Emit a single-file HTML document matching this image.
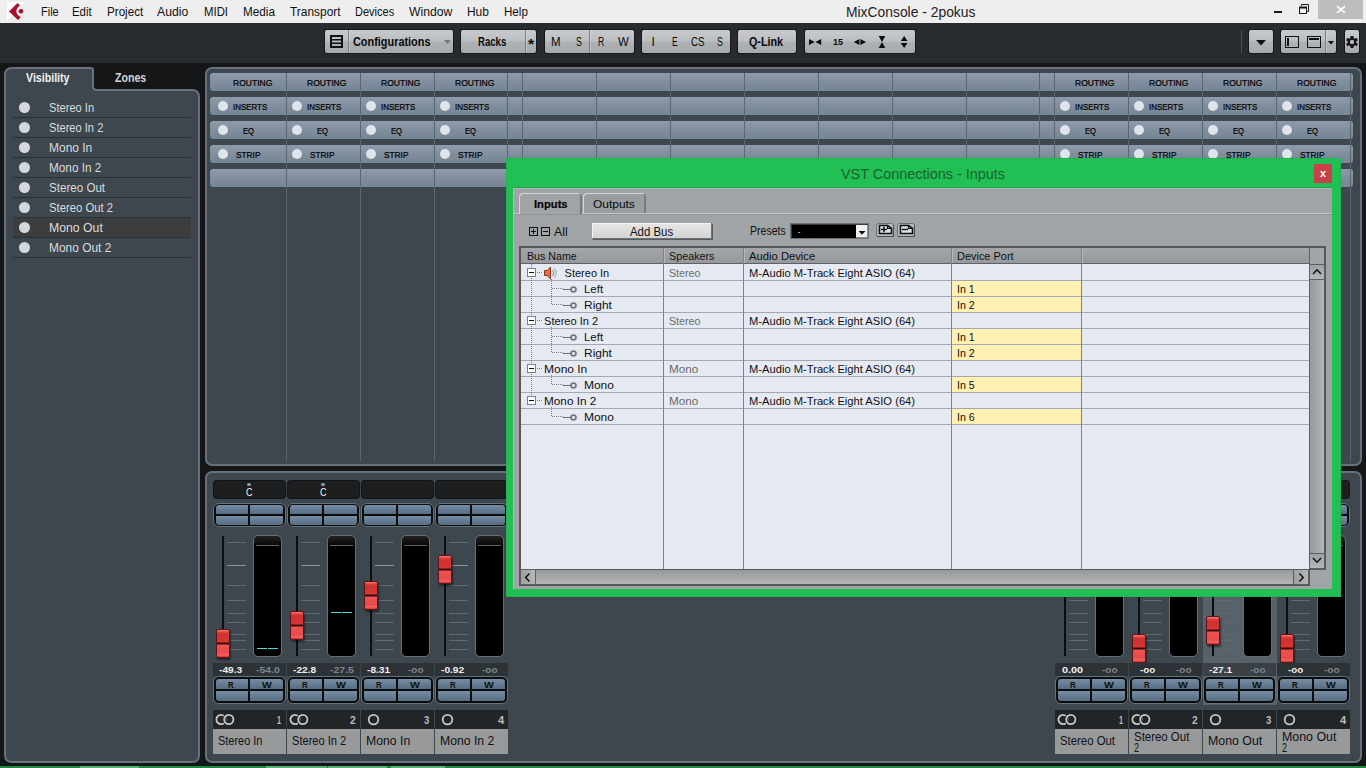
<!DOCTYPE html><html><head><meta charset="utf-8"><title>MixConsole - 2pokus</title><style>
*{box-sizing:border-box;margin:0;padding:0}
html,body{width:1366px;height:768px;overflow:hidden;background:#141617;font-family:"Liberation Sans",sans-serif;}
div{position:absolute}
span{position:absolute;white-space:nowrap}
svg{position:absolute}
.t{transform-origin:0 0}
#menubar{left:0;top:0;width:1366px;height:23px;background:#eeeeee}
#toolbar{left:0;top:23px;width:1366px;height:40px;background:#272b2f}
.tb{top:30px;height:23px;border-radius:2px;background:linear-gradient(#c8cbcd,#bbbec1 48%,#aeb2b5 53%,#a6aaad);box-shadow:0 0 0 1px #16181a}
.tb i{position:absolute;top:0;width:1px;height:23px;background:#7c8083;box-shadow:1px 0 0 rgba(255,255,255,.22)}
.panel{background:#3f474e;border:2px solid #66717b;border-radius:7px}
.row{height:18px;border-radius:3px;background:linear-gradient(#8e9caa,#7f8d9c 55%,#768696)}
.dot{width:10.600px;height:10.600px;border-radius:6px;background:#dfe3ea}
.vl{width:1px;background:#5a6672}
</style></head><body>
<div id="menubar"></div>
<svg style="left:0;top:0" width="32" height="23"><rect x="7" y="2" width="18" height="19" fill="#ebebeb"/><path d="M7 2 H25 L7 21 Z" fill="#fcfcfc"/><path d="M17.500 3 L20 5.600 C15.500 9 14.500 13.500 20.800 17.300 L18 19.900 L9 11.500 Z" fill="#a8112b"/><circle cx="21" cy="11.300" r="2.300" fill="#a8112b"/></svg>
<span class="t" style="left:40.5px;top:5px;font-size:12.5px;line-height:14px;color:#111;transform:scaleX(0.880);">File</span>
<span class="t" style="left:72.3px;top:5px;font-size:12.5px;line-height:14px;color:#111;transform:scaleX(0.909);">Edit</span>
<span class="t" style="left:106.5px;top:5px;font-size:12.5px;line-height:14px;color:#111;transform:scaleX(0.931);">Project</span>
<span class="t" style="left:157.1px;top:5px;font-size:12.5px;line-height:14px;color:#111;transform:scaleX(0.978);">Audio</span>
<span class="t" style="left:203.6px;top:5px;font-size:12.5px;line-height:14px;color:#111;transform:scaleX(0.910);">MIDI</span>
<span class="t" style="left:242.6px;top:5px;font-size:12.5px;line-height:14px;color:#111;transform:scaleX(0.938);">Media</span>
<span class="t" style="left:289.5px;top:5px;font-size:12.5px;line-height:14px;color:#111;transform:scaleX(0.953);">Transport</span>
<span class="t" style="left:354.6px;top:5px;font-size:12.5px;line-height:14px;color:#111;transform:scaleX(0.882);">Devices</span>
<span class="t" style="left:408.5px;top:5px;font-size:12.5px;line-height:14px;color:#111;transform:scaleX(0.975);">Window</span>
<span class="t" style="left:466.5px;top:5px;font-size:12.5px;line-height:14px;color:#111;transform:scaleX(0.955);">Hub</span>
<span class="t" style="left:503.6px;top:5px;font-size:12.5px;line-height:14px;color:#111;transform:scaleX(0.927);">Help</span>
<span class="t" style="left:845.6px;top:4px;font-size:14px;line-height:16px;color:#222;transform:scaleX(0.990);">MixConsole - 2pokus</span>
<div style="left:1318px;top:0;width:45px;height:19px;background:#bdbdbd"></div>
<svg style="left:1270px;top:0" width="96" height="22" viewBox="0 0 96 22"><rect x="4" y="11" width="8" height="2" fill="#1a1a1a"/><path d="M31.500 6 V4.500 H38.500 V11.500 H37" fill="none" stroke="#1a1a1a"/><rect x="29.500" y="7.500" width="7" height="6" fill="none" stroke="#1a1a1a"/><rect x="29" y="6.500" width="8" height="2" fill="#1a1a1a"/><path d="M67 6.200 L75 12.800 M75 6.200 L67 12.800" stroke="#fff" stroke-width="1.600"/></svg>
<div id="toolbar"></div>
<div class="tb" style="left:325px;width:128px"><i style="left:23px"></i><svg style="left:5px;top:5px" width="13" height="13"><rect x="1" y="1" width="11" height="11" fill="none" stroke="#111" stroke-width="2"/><rect x="2" y="4" width="9" height="1.500" fill="#111"/><rect x="2" y="7.500" width="9" height="1.500" fill="#111"/></svg><svg style="left:119px;top:10px" width="8" height="5"><path d="M0 0 H7 L3.500 4 Z" fill="#777"/></svg></div>
<span class="t" style="left:352.6px;top:35px;font-size:12px;line-height:14px;color:#0a0a0a;font-weight:bold;transform:scaleX(0.908);">Configurations</span>
<div class="tb" style="left:461px;width:75px"><i style="left:64px"></i></div>
<span class="t" style="left:478px;top:35px;font-size:12px;line-height:14px;color:#0a0a0a;font-weight:bold;transform:scaleX(0.798);">Racks</span>
<span class="t" style="left:528.4px;top:36px;font-size:14px;line-height:16px;color:#0a0a0a;font-weight:bold;transform:scaleX(1.136);">*</span>
<div class="tb" style="left:545px;width:89px"><i style="left:44px"></i></div>
<span class="t" style="left:550.7px;top:35px;font-size:12px;line-height:14px;color:#0a0a0a;transform:scaleX(0.958);">M</span>
<span class="t" style="left:575.7px;top:35px;font-size:12px;line-height:14px;color:#0a0a0a;transform:scaleX(0.739);">S</span>
<span class="t" style="left:597.6px;top:35px;font-size:12px;line-height:14px;color:#0a0a0a;transform:scaleX(0.718);">R</span>
<span class="t" style="left:618.4px;top:35px;font-size:12px;line-height:14px;color:#0a0a0a;transform:scaleX(0.952);">W</span>
<div class="tb" style="left:642px;width:88px"></div>
<span class="t" style="left:651.6px;top:35px;font-size:12px;line-height:14px;color:#0a0a0a;">I</span>
<span class="t" style="left:672px;top:35px;font-size:12px;line-height:14px;color:#0a0a0a;transform:scaleX(0.702);">E</span>
<span class="t" style="left:690.9px;top:35px;font-size:12px;line-height:14px;color:#0a0a0a;transform:scaleX(0.809);">CS</span>
<span class="t" style="left:716.9px;top:35px;font-size:12px;line-height:14px;color:#0a0a0a;transform:scaleX(0.727);">S</span>
<div class="tb" style="left:738px;width:58px"></div>
<span class="t" style="left:749.4px;top:35px;font-size:12px;line-height:14px;color:#0a0a0a;font-weight:bold;transform:scaleX(0.896);">Q-Link</span>
<div class="tb" style="left:805px;width:110px"><svg style="left:0;top:0" width="110" height="23"><g fill="#0c0c0c"><path d="M4 9 L9.700 12 L4 15Z M16.200 9 L10.500 12 L16.200 15Z"/><path d="M54.400 9 L48.800 12 L54.400 15Z M55.400 9 L61 12 L55.400 15Z"/><path d="M73.700 6 H80.300 L77 11.900Z M73.700 18 H80.300 L77 12.100Z"/><path d="M95.800 11 H102.500 L99.150 6Z M95.800 13 H102.500 L99.150 18Z"/></g></svg></div>
<span class="t" style="left:833px;top:36px;font-size:9.5px;line-height:11px;color:#0a0a0a;font-weight:bold;transform:scaleX(0.948);">15</span>
<div style="left:1241px;top:30px;width:1px;height:23px;background:#4a4f53"></div>
<div class="tb" style="left:1249px;width:24px"><svg style="left:7px;top:10px" width="10" height="6"><path d="M0 0 H10 L5 5.500Z" fill="#111"/></svg></div>
<div class="tb" style="left:1281px;width:55px"><i style="left:44px"></i><svg style="left:0;top:0" width="55" height="23"><g fill="none" stroke="#111" stroke-width="1"><rect x="4.500" y="6.500" width="13" height="11"/><rect x="26.500" y="6.500" width="13" height="11"/></g><rect x="6" y="8" width="2" height="8" fill="#111"/><rect x="28" y="8" width="10" height="2" fill="#111"/><path d="M47 11 H53 L50 14.500Z" fill="#111"/></svg></div>
<div class="tb" style="left:1345px;width:14px"><svg style="left:0px;top:5px" width="14" height="14" viewBox="0 0 14 14"><g transform="translate(7,7)"><g fill="#111"><rect x="-1.500" y="-6" width="3" height="12"/><rect x="-1.500" y="-6" width="3" height="12" transform="rotate(60)"/><rect x="-1.500" y="-6" width="3" height="12" transform="rotate(120)"/><circle r="4.300"/></g><circle r="2.200" fill="#b3b6b9"/></g></svg></div>
<svg style="left:0;top:60px" width="204" height="706"><path d="M5 15 Q5 8 12 8 H91 Q93 8 93 10 V26 Q93 30 97 30 H192 Q199 30 199 37 V695 Q199 702 192 702 H12 Q5 702 5 695 Z" fill="#3f474e" stroke="#66717b" stroke-width="2"/></svg>
<span class="t" style="left:25.5px;top:71px;font-size:12px;line-height:14px;color:#f2f2f2;font-weight:bold;transform:scaleX(0.885);">Visibility</span>
<span class="t" style="left:114.6px;top:71px;font-size:12px;line-height:14px;color:#d6d6d6;font-weight:bold;transform:scaleX(0.883);">Zones</span>
<div class="dot" style="left:19px;top:102px;background:#d4d8de"></div>
<span class="t" style="left:48.9px;top:101px;font-size:12.5px;line-height:14px;color:#d9dcdf;transform:scaleX(0.889);">Stereo In</span>
<div style="left:13px;top:117px;width:178px;height:1px;background:#2b3035"></div>
<div class="dot" style="left:19px;top:122px;background:#d4d8de"></div>
<span class="t" style="left:48.9px;top:121px;font-size:12.5px;line-height:14px;color:#d9dcdf;transform:scaleX(0.888);">Stereo In 2</span>
<div style="left:13px;top:137px;width:178px;height:1px;background:#2b3035"></div>
<div class="dot" style="left:19px;top:142px;background:#d4d8de"></div>
<span class="t" style="left:48.9px;top:141px;font-size:12.5px;line-height:14px;color:#d9dcdf;transform:scaleX(0.958);">Mono In</span>
<div style="left:13px;top:157px;width:178px;height:1px;background:#2b3035"></div>
<div class="dot" style="left:19px;top:162px;background:#d4d8de"></div>
<span class="t" style="left:48.9px;top:161px;font-size:12.5px;line-height:14px;color:#d9dcdf;transform:scaleX(0.941);">Mono In 2</span>
<div style="left:13px;top:177px;width:178px;height:1px;background:#2b3035"></div>
<div class="dot" style="left:19px;top:182px;background:#d4d8de"></div>
<span class="t" style="left:48.9px;top:181px;font-size:12.5px;line-height:14px;color:#d9dcdf;transform:scaleX(0.928);">Stereo Out</span>
<div style="left:13px;top:197px;width:178px;height:1px;background:#2b3035"></div>
<div class="dot" style="left:19px;top:202px;background:#d4d8de"></div>
<span class="t" style="left:48.9px;top:201px;font-size:12.5px;line-height:14px;color:#d9dcdf;transform:scaleX(0.904);">Stereo Out 2</span>
<div style="left:13px;top:217px;width:178px;height:1px;background:#2b3035"></div>
<div style="left:13px;top:218px;width:178px;height:19px;background:#3b3d3f"></div>
<div class="dot" style="left:19px;top:222px;background:#d4d8de"></div>
<span class="t" style="left:48.9px;top:221px;font-size:12.5px;line-height:14px;color:#d9dcdf;transform:scaleX(0.980);">Mono Out</span>
<div style="left:13px;top:237px;width:178px;height:1px;background:#2b3035"></div>
<div class="dot" style="left:19px;top:242px;background:#d4d8de"></div>
<span class="t" style="left:48.9px;top:241px;font-size:12.5px;line-height:14px;color:#d9dcdf;transform:scaleX(0.954);">Mono Out 2</span>
<div style="left:13px;top:257px;width:178px;height:1px;background:#2b3035"></div>
<div class="panel" style="left:205px;top:67px;width:1157px;height:399px"></div>
<div class="row" style="left:210px;top:73px;width:1143px"></div>
<div class="row" style="left:210px;top:97px;width:1143px"></div>
<div class="row" style="left:210px;top:121px;width:1143px"></div>
<div class="row" style="left:210px;top:145px;width:1143px"></div>
<div class="row" style="left:210px;top:169px;width:1143px"></div>
<div class="vl" style="left:286px;top:73px;height:388px"></div>
<div class="vl" style="left:360px;top:73px;height:388px"></div>
<div class="vl" style="left:434px;top:73px;height:388px"></div>
<div class="vl" style="left:507px;top:73px;height:388px"></div>
<div class="vl" style="left:522px;top:73px;height:388px"></div>
<div class="vl" style="left:596px;top:73px;height:388px"></div>
<div class="vl" style="left:670px;top:73px;height:388px"></div>
<div class="vl" style="left:744px;top:73px;height:388px"></div>
<div class="vl" style="left:818px;top:73px;height:388px"></div>
<div class="vl" style="left:892px;top:73px;height:388px"></div>
<div class="vl" style="left:966px;top:73px;height:388px"></div>
<div class="vl" style="left:1039px;top:73px;height:388px"></div>
<div class="vl" style="left:1054px;top:73px;height:388px"></div>
<div class="vl" style="left:1128px;top:73px;height:388px"></div>
<div class="vl" style="left:1202px;top:73px;height:388px"></div>
<div class="vl" style="left:1276px;top:73px;height:388px"></div>
<div class="vl" style="left:1350px;top:73px;height:388px"></div>
<span class="t" style="left:232.6px;top:77px;font-size:9.7px;line-height:11px;color:#000;transform:scaleX(0.883);-webkit-text-stroke:0.22px #000;">ROUTING</span>
<span class="t" style="left:306.6px;top:77px;font-size:9.7px;line-height:11px;color:#000;transform:scaleX(0.883);-webkit-text-stroke:0.22px #000;">ROUTING</span>
<span class="t" style="left:380.6px;top:77px;font-size:9.7px;line-height:11px;color:#000;transform:scaleX(0.883);-webkit-text-stroke:0.22px #000;">ROUTING</span>
<span class="t" style="left:454.6px;top:77px;font-size:9.7px;line-height:11px;color:#000;transform:scaleX(0.883);-webkit-text-stroke:0.22px #000;">ROUTING</span>
<span class="t" style="left:1074.5px;top:77px;font-size:9.7px;line-height:11px;color:#000;transform:scaleX(0.883);-webkit-text-stroke:0.22px #000;">ROUTING</span>
<span class="t" style="left:1148.5px;top:77px;font-size:9.7px;line-height:11px;color:#000;transform:scaleX(0.883);-webkit-text-stroke:0.22px #000;">ROUTING</span>
<span class="t" style="left:1222.5px;top:77px;font-size:9.7px;line-height:11px;color:#000;transform:scaleX(0.883);-webkit-text-stroke:0.22px #000;">ROUTING</span>
<span class="t" style="left:1296.5px;top:77px;font-size:9.7px;line-height:11px;color:#000;transform:scaleX(0.883);-webkit-text-stroke:0.22px #000;">ROUTING</span>
<div class="dot" style="left:217.7px;top:100.7px"></div>
<span class="t" style="left:232.6px;top:101px;font-size:9.7px;line-height:11px;color:#000;transform:scaleX(0.819);-webkit-text-stroke:0.22px #000;">INSERTS</span>
<div class="dot" style="left:291.7px;top:100.7px"></div>
<span class="t" style="left:306.6px;top:101px;font-size:9.7px;line-height:11px;color:#000;transform:scaleX(0.819);-webkit-text-stroke:0.22px #000;">INSERTS</span>
<div class="dot" style="left:365.7px;top:100.7px"></div>
<span class="t" style="left:380.6px;top:101px;font-size:9.7px;line-height:11px;color:#000;transform:scaleX(0.819);-webkit-text-stroke:0.22px #000;">INSERTS</span>
<div class="dot" style="left:439.7px;top:100.7px"></div>
<span class="t" style="left:454.6px;top:101px;font-size:9.7px;line-height:11px;color:#000;transform:scaleX(0.819);-webkit-text-stroke:0.22px #000;">INSERTS</span>
<div class="dot" style="left:1059.6px;top:100.7px"></div>
<span class="t" style="left:1074.5px;top:101px;font-size:9.7px;line-height:11px;color:#000;transform:scaleX(0.819);-webkit-text-stroke:0.22px #000;">INSERTS</span>
<div class="dot" style="left:1133.6px;top:100.7px"></div>
<span class="t" style="left:1148.5px;top:101px;font-size:9.7px;line-height:11px;color:#000;transform:scaleX(0.819);-webkit-text-stroke:0.22px #000;">INSERTS</span>
<div class="dot" style="left:1207.6px;top:100.7px"></div>
<span class="t" style="left:1222.5px;top:101px;font-size:9.7px;line-height:11px;color:#000;transform:scaleX(0.819);-webkit-text-stroke:0.22px #000;">INSERTS</span>
<div class="dot" style="left:1281.6px;top:100.7px"></div>
<span class="t" style="left:1296.5px;top:101px;font-size:9.7px;line-height:11px;color:#000;transform:scaleX(0.819);-webkit-text-stroke:0.22px #000;">INSERTS</span>
<div class="dot" style="left:217.7px;top:124.7px"></div>
<span class="t" style="left:243.4px;top:125px;font-size:9.7px;line-height:11px;color:#000;transform:scaleX(0.785);-webkit-text-stroke:0.22px #000;">EQ</span>
<div class="dot" style="left:291.7px;top:124.7px"></div>
<span class="t" style="left:317.4px;top:125px;font-size:9.7px;line-height:11px;color:#000;transform:scaleX(0.785);-webkit-text-stroke:0.22px #000;">EQ</span>
<div class="dot" style="left:365.7px;top:124.7px"></div>
<span class="t" style="left:391.4px;top:125px;font-size:9.7px;line-height:11px;color:#000;transform:scaleX(0.785);-webkit-text-stroke:0.22px #000;">EQ</span>
<div class="dot" style="left:439.7px;top:124.7px"></div>
<span class="t" style="left:465.4px;top:125px;font-size:9.7px;line-height:11px;color:#000;transform:scaleX(0.785);-webkit-text-stroke:0.22px #000;">EQ</span>
<div class="dot" style="left:1059.6px;top:124.7px"></div>
<span class="t" style="left:1085.3px;top:125px;font-size:9.7px;line-height:11px;color:#000;transform:scaleX(0.785);-webkit-text-stroke:0.22px #000;">EQ</span>
<div class="dot" style="left:1133.6px;top:124.7px"></div>
<span class="t" style="left:1159.3px;top:125px;font-size:9.7px;line-height:11px;color:#000;transform:scaleX(0.785);-webkit-text-stroke:0.22px #000;">EQ</span>
<div class="dot" style="left:1207.6px;top:124.7px"></div>
<span class="t" style="left:1233.3px;top:125px;font-size:9.7px;line-height:11px;color:#000;transform:scaleX(0.785);-webkit-text-stroke:0.22px #000;">EQ</span>
<div class="dot" style="left:1281.6px;top:124.7px"></div>
<span class="t" style="left:1307.3px;top:125px;font-size:9.7px;line-height:11px;color:#000;transform:scaleX(0.785);-webkit-text-stroke:0.22px #000;">EQ</span>
<div class="dot" style="left:217.7px;top:148.7px"></div>
<span class="t" style="left:236.4px;top:149px;font-size:9.7px;line-height:11px;color:#000;transform:scaleX(0.858);-webkit-text-stroke:0.22px #000;">STRIP</span>
<div class="dot" style="left:291.7px;top:148.7px"></div>
<span class="t" style="left:310.4px;top:149px;font-size:9.7px;line-height:11px;color:#000;transform:scaleX(0.858);-webkit-text-stroke:0.22px #000;">STRIP</span>
<div class="dot" style="left:365.7px;top:148.7px"></div>
<span class="t" style="left:384.4px;top:149px;font-size:9.7px;line-height:11px;color:#000;transform:scaleX(0.858);-webkit-text-stroke:0.22px #000;">STRIP</span>
<div class="dot" style="left:439.7px;top:148.7px"></div>
<span class="t" style="left:458.4px;top:149px;font-size:9.7px;line-height:11px;color:#000;transform:scaleX(0.858);-webkit-text-stroke:0.22px #000;">STRIP</span>
<div class="dot" style="left:1059.6px;top:148.7px"></div>
<span class="t" style="left:1078.3px;top:149px;font-size:9.7px;line-height:11px;color:#000;transform:scaleX(0.858);-webkit-text-stroke:0.22px #000;">STRIP</span>
<div class="dot" style="left:1133.6px;top:148.7px"></div>
<span class="t" style="left:1152.3px;top:149px;font-size:9.7px;line-height:11px;color:#000;transform:scaleX(0.858);-webkit-text-stroke:0.22px #000;">STRIP</span>
<div class="dot" style="left:1207.6px;top:148.7px"></div>
<span class="t" style="left:1226.3px;top:149px;font-size:9.7px;line-height:11px;color:#000;transform:scaleX(0.858);-webkit-text-stroke:0.22px #000;">STRIP</span>
<div class="dot" style="left:1281.6px;top:148.7px"></div>
<span class="t" style="left:1300.3px;top:149px;font-size:9.7px;line-height:11px;color:#000;transform:scaleX(0.858);-webkit-text-stroke:0.22px #000;">STRIP</span>
<div class="panel" style="left:205px;top:471px;width:1157px;height:292px"></div>
<div style="left:1203px;top:473px;width:74px;height:232px;background:#596168"></div>
<div style="left:214px;top:481px;width:71px;height:17px;background:#1c1e20;border-radius:3px;box-shadow:0 0 0 1px #131416"></div>
<div style="left:247px;top:483px;width:4px;height:3px;border-radius:2px;background:#8c9aa8"></div>
<span class="t" style="left:245.8px;top:486px;font-size:10.5px;line-height:12px;color:#f2f2f2;transform:scaleX(0.860);">C</span>
<div style="left:213px;top:503px;width:73px;height:24px;background:#0b0c0d;border-radius:6px;border:1px solid #67727a">
<div style="left:2px;top:1px;width:32px;height:9px;background:linear-gradient(#768da4,#566c83);border-radius:3px 0 0 0"></div>
<div style="left:36px;top:1px;width:33px;height:9px;background:linear-gradient(#768da4,#566c83);border-radius:0 3px 0 0"></div>
<div style="left:2px;top:12px;width:32px;height:9px;background:linear-gradient(#768da4,#566c83);border-radius:0 0 0 3px"></div>
<div style="left:36px;top:12px;width:33px;height:9px;background:linear-gradient(#768da4,#566c83);border-radius:0 0 3px 0"></div>
</div>
<div style="left:222px;top:536px;width:2px;height:120px;background:#0d0e0f"></div>
<div style="left:227px;top:542px;width:19px;height:1px;background:#5f6970"></div>
<div style="left:227px;top:565px;width:19px;height:1px;background:#8a949c"></div>
<div style="left:227px;top:585px;width:19px;height:1px;background:#5f6970"></div>
<div style="left:227px;top:600px;width:19px;height:1px;background:#5f6970"></div>
<div style="left:227px;top:613px;width:19px;height:1px;background:#5f6970"></div>
<div style="left:227px;top:622px;width:19px;height:1px;background:#5f6970"></div>
<div style="left:227px;top:634px;width:19px;height:1px;background:#5f6970"></div>
<div style="left:227px;top:640px;width:19px;height:1px;background:#5f6970"></div>
<div style="left:227px;top:649px;width:19px;height:1px;background:#5f6970"></div>
<div style="left:253px;top:535px;width:29px;height:122px;border-radius:5px;background:linear-gradient(#232122,#0a0909 9px,#000 10px);border:1px solid #656e76">
<div style="left:2px;top:9px;width:23px;height:1px;background:#5f6468"></div>
<div style="left:3px;top:112px;width:10px;height:1px;background:#56d4dc"></div><div style="left:14px;top:112px;width:10px;height:1px;background:#56d4dc"></div>
</div>
<div style="left:216px;top:629px;width:14px;height:29px;border-radius:2px;border:1px solid #5c1414;background:linear-gradient(#f47c7c,#e24444 2px,#cf3030 4px,#d63636 12px,#3a0a0a 13px,#3a0a0a 14px,#ee5252 15px,#e64a4a 23px,#f26464 25px,#d03030 27px);box-shadow:1px 2px 2px rgba(0,0,0,.45)"></div>
<div style="left:213px;top:663px;width:73px;height:13px;background:#2d3237"></div>
<span class="t" style="left:218.8px;top:664px;font-size:9.5px;line-height:11px;color:#f0f0f0;font-weight:bold;transform:scaleX(1.071);">-49.3</span>
<span class="t" style="left:256px;top:664px;font-size:9.5px;line-height:11px;color:#7d858c;font-weight:bold;transform:scaleX(1.103);">-54.0</span>
<div style="left:213px;top:676px;width:73px;height:28px;background:#0b0c0d;border-radius:6px;border:1px solid #67727a">
<div style="left:2px;top:2px;width:32px;height:10px;background:linear-gradient(#768da4,#566c83);border-radius:3px 0 0 0"></div>
<div style="left:36px;top:2px;width:33px;height:10px;background:linear-gradient(#768da4,#566c83);border-radius:0 3px 0 0"></div>
<div style="left:2px;top:14px;width:32px;height:10px;background:linear-gradient(#768da4,#566c83);border-radius:0 0 0 3px"></div>
<div style="left:36px;top:14px;width:33px;height:10px;background:linear-gradient(#768da4,#566c83);border-radius:0 0 3px 0"></div>
</div>
<span class="t" style="left:228px;top:680px;font-size:9px;line-height:10px;color:#0c0f0c;font-weight:bold;transform:scaleX(0.880);">R</span>
<span class="t" style="left:262.2px;top:680px;font-size:9px;line-height:10px;color:#0c0f0c;font-weight:bold;transform:scaleX(1.152);">W</span>
<div style="left:213px;top:710px;width:73px;height:19px;background:#222528"></div>
<svg style="left:214px;top:712px" width="22" height="15"><circle cx="7" cy="7.500" r="4.600" fill="none" stroke="#c5c8cb" stroke-width="1.800"/><circle cx="14.800" cy="7.500" r="4.600" fill="none" stroke="#222528" stroke-width="3.600"/><circle cx="14.800" cy="7.500" r="4.600" fill="none" stroke="#c5c8cb" stroke-width="1.800"/></svg>
<span class="t" style="left:277px;top:714px;font-size:11px;line-height:12px;color:#b8bcc0;font-weight:bold;transform:scaleX(0.655);">1</span>
<div style="left:213px;top:729px;width:73px;height:25px;background:#97999b"></div>
<span class="t" style="left:217.8px;top:734px;font-size:12px;line-height:14px;color:#111;transform:scaleX(0.913);">Stereo In</span>
<div style="left:288px;top:481px;width:71px;height:17px;background:#1c1e20;border-radius:3px;box-shadow:0 0 0 1px #131416"></div>
<div style="left:321px;top:483px;width:4px;height:3px;border-radius:2px;background:#8c9aa8"></div>
<span class="t" style="left:319.8px;top:486px;font-size:10.5px;line-height:12px;color:#f2f2f2;transform:scaleX(0.860);">C</span>
<div style="left:287px;top:503px;width:73px;height:24px;background:#0b0c0d;border-radius:6px;border:1px solid #67727a">
<div style="left:2px;top:1px;width:32px;height:9px;background:linear-gradient(#768da4,#566c83);border-radius:3px 0 0 0"></div>
<div style="left:36px;top:1px;width:33px;height:9px;background:linear-gradient(#768da4,#566c83);border-radius:0 3px 0 0"></div>
<div style="left:2px;top:12px;width:32px;height:9px;background:linear-gradient(#768da4,#566c83);border-radius:0 0 0 3px"></div>
<div style="left:36px;top:12px;width:33px;height:9px;background:linear-gradient(#768da4,#566c83);border-radius:0 0 3px 0"></div>
</div>
<div style="left:296px;top:536px;width:2px;height:120px;background:#0d0e0f"></div>
<div style="left:301px;top:542px;width:19px;height:1px;background:#5f6970"></div>
<div style="left:301px;top:565px;width:19px;height:1px;background:#8a949c"></div>
<div style="left:301px;top:585px;width:19px;height:1px;background:#5f6970"></div>
<div style="left:301px;top:600px;width:19px;height:1px;background:#5f6970"></div>
<div style="left:301px;top:613px;width:19px;height:1px;background:#5f6970"></div>
<div style="left:301px;top:622px;width:19px;height:1px;background:#5f6970"></div>
<div style="left:301px;top:634px;width:19px;height:1px;background:#5f6970"></div>
<div style="left:301px;top:640px;width:19px;height:1px;background:#5f6970"></div>
<div style="left:301px;top:649px;width:19px;height:1px;background:#5f6970"></div>
<div style="left:327px;top:535px;width:29px;height:122px;border-radius:5px;background:linear-gradient(#232122,#0a0909 9px,#000 10px);border:1px solid #656e76">
<div style="left:2px;top:9px;width:23px;height:1px;background:#5f6468"></div>
<div style="left:3px;top:76px;width:10px;height:1px;background:#56d4dc"></div><div style="left:14px;top:76px;width:10px;height:1px;background:#56d4dc"></div>
</div>
<div style="left:290px;top:611px;width:14px;height:29px;border-radius:2px;border:1px solid #5c1414;background:linear-gradient(#f47c7c,#e24444 2px,#cf3030 4px,#d63636 12px,#3a0a0a 13px,#3a0a0a 14px,#ee5252 15px,#e64a4a 23px,#f26464 25px,#d03030 27px);box-shadow:1px 2px 2px rgba(0,0,0,.45)"></div>
<div style="left:287px;top:663px;width:73px;height:13px;background:#2d3237"></div>
<span class="t" style="left:292.8px;top:664px;font-size:9.5px;line-height:11px;color:#f0f0f0;font-weight:bold;transform:scaleX(1.071);">-22.8</span>
<span class="t" style="left:330px;top:664px;font-size:9.5px;line-height:11px;color:#7d858c;font-weight:bold;transform:scaleX(1.103);">-27.5</span>
<div style="left:287px;top:676px;width:73px;height:28px;background:#0b0c0d;border-radius:6px;border:1px solid #67727a">
<div style="left:2px;top:2px;width:32px;height:10px;background:linear-gradient(#768da4,#566c83);border-radius:3px 0 0 0"></div>
<div style="left:36px;top:2px;width:33px;height:10px;background:linear-gradient(#768da4,#566c83);border-radius:0 3px 0 0"></div>
<div style="left:2px;top:14px;width:32px;height:10px;background:linear-gradient(#768da4,#566c83);border-radius:0 0 0 3px"></div>
<div style="left:36px;top:14px;width:33px;height:10px;background:linear-gradient(#768da4,#566c83);border-radius:0 0 3px 0"></div>
</div>
<span class="t" style="left:302px;top:680px;font-size:9px;line-height:10px;color:#0c0f0c;font-weight:bold;transform:scaleX(0.880);">R</span>
<span class="t" style="left:336.2px;top:680px;font-size:9px;line-height:10px;color:#0c0f0c;font-weight:bold;transform:scaleX(1.152);">W</span>
<div style="left:287px;top:710px;width:73px;height:19px;background:#222528"></div>
<svg style="left:288px;top:712px" width="22" height="15"><circle cx="7" cy="7.500" r="4.600" fill="none" stroke="#c5c8cb" stroke-width="1.800"/><circle cx="14.800" cy="7.500" r="4.600" fill="none" stroke="#222528" stroke-width="3.600"/><circle cx="14.800" cy="7.500" r="4.600" fill="none" stroke="#c5c8cb" stroke-width="1.800"/></svg>
<span class="t" style="left:349.8px;top:714px;font-size:11px;line-height:12px;color:#b8bcc0;font-weight:bold;transform:scaleX(0.934);">2</span>
<div style="left:287px;top:729px;width:73px;height:25px;background:#97999b"></div>
<span class="t" style="left:291.8px;top:734px;font-size:12px;line-height:14px;color:#111;transform:scaleX(0.924);">Stereo In 2</span>
<div style="left:362px;top:481px;width:71px;height:17px;background:#1c1e20;border-radius:3px;box-shadow:0 0 0 1px #131416"></div>
<div style="left:361px;top:503px;width:73px;height:24px;background:#0b0c0d;border-radius:6px;border:1px solid #67727a">
<div style="left:2px;top:1px;width:32px;height:9px;background:linear-gradient(#768da4,#566c83);border-radius:3px 0 0 0"></div>
<div style="left:36px;top:1px;width:33px;height:9px;background:linear-gradient(#768da4,#566c83);border-radius:0 3px 0 0"></div>
<div style="left:2px;top:12px;width:32px;height:9px;background:linear-gradient(#768da4,#566c83);border-radius:0 0 0 3px"></div>
<div style="left:36px;top:12px;width:33px;height:9px;background:linear-gradient(#768da4,#566c83);border-radius:0 0 3px 0"></div>
</div>
<div style="left:370px;top:536px;width:2px;height:120px;background:#0d0e0f"></div>
<div style="left:375px;top:542px;width:19px;height:1px;background:#5f6970"></div>
<div style="left:375px;top:565px;width:19px;height:1px;background:#8a949c"></div>
<div style="left:375px;top:585px;width:19px;height:1px;background:#5f6970"></div>
<div style="left:375px;top:600px;width:19px;height:1px;background:#5f6970"></div>
<div style="left:375px;top:613px;width:19px;height:1px;background:#5f6970"></div>
<div style="left:375px;top:622px;width:19px;height:1px;background:#5f6970"></div>
<div style="left:375px;top:634px;width:19px;height:1px;background:#5f6970"></div>
<div style="left:375px;top:640px;width:19px;height:1px;background:#5f6970"></div>
<div style="left:375px;top:649px;width:19px;height:1px;background:#5f6970"></div>
<div style="left:401px;top:535px;width:29px;height:122px;border-radius:5px;background:linear-gradient(#232122,#0a0909 9px,#000 10px);border:1px solid #656e76">
<div style="left:2px;top:9px;width:23px;height:1px;background:#5f6468"></div>
</div>
<div style="left:364px;top:581px;width:14px;height:29px;border-radius:2px;border:1px solid #5c1414;background:linear-gradient(#f47c7c,#e24444 2px,#cf3030 4px,#d63636 12px,#3a0a0a 13px,#3a0a0a 14px,#ee5252 15px,#e64a4a 23px,#f26464 25px,#d03030 27px);box-shadow:1px 2px 2px rgba(0,0,0,.45)"></div>
<div style="left:361px;top:663px;width:73px;height:13px;background:#2d3237"></div>
<span class="t" style="left:366.8px;top:664px;font-size:9.5px;line-height:11px;color:#f0f0f0;font-weight:bold;transform:scaleX(1.071);">-8.31</span>
<span class="t" style="left:407.5px;top:664px;font-size:9.5px;line-height:11px;color:#7d858c;font-weight:bold;transform:scaleX(1.049);">-oo</span>
<div style="left:361px;top:676px;width:73px;height:28px;background:#0b0c0d;border-radius:6px;border:1px solid #67727a">
<div style="left:2px;top:2px;width:32px;height:10px;background:linear-gradient(#768da4,#566c83);border-radius:3px 0 0 0"></div>
<div style="left:36px;top:2px;width:33px;height:10px;background:linear-gradient(#768da4,#566c83);border-radius:0 3px 0 0"></div>
<div style="left:2px;top:14px;width:32px;height:10px;background:linear-gradient(#768da4,#566c83);border-radius:0 0 0 3px"></div>
<div style="left:36px;top:14px;width:33px;height:10px;background:linear-gradient(#768da4,#566c83);border-radius:0 0 3px 0"></div>
</div>
<span class="t" style="left:376px;top:680px;font-size:9px;line-height:10px;color:#0c0f0c;font-weight:bold;transform:scaleX(0.880);">R</span>
<span class="t" style="left:410.2px;top:680px;font-size:9px;line-height:10px;color:#0c0f0c;font-weight:bold;transform:scaleX(1.152);">W</span>
<div style="left:361px;top:710px;width:73px;height:19px;background:#222528"></div>
<svg style="left:365px;top:712px" width="16" height="15"><circle cx="8.500" cy="7.600" r="4.800" fill="none" stroke="#c5c8cb" stroke-width="1.800"/></svg>
<span class="t" style="left:424px;top:714px;font-size:11px;line-height:12px;color:#b8bcc0;font-weight:bold;transform:scaleX(0.868);">3</span>
<div style="left:361px;top:729px;width:73px;height:25px;background:#97999b"></div>
<span class="t" style="left:365.8px;top:734px;font-size:12px;line-height:14px;color:#111;transform:scaleX(1.019);">Mono In</span>
<div style="left:436px;top:481px;width:71px;height:17px;background:#1c1e20;border-radius:3px;box-shadow:0 0 0 1px #131416"></div>
<div style="left:435px;top:503px;width:73px;height:24px;background:#0b0c0d;border-radius:6px;border:1px solid #67727a">
<div style="left:2px;top:1px;width:32px;height:9px;background:linear-gradient(#768da4,#566c83);border-radius:3px 0 0 0"></div>
<div style="left:36px;top:1px;width:33px;height:9px;background:linear-gradient(#768da4,#566c83);border-radius:0 3px 0 0"></div>
<div style="left:2px;top:12px;width:32px;height:9px;background:linear-gradient(#768da4,#566c83);border-radius:0 0 0 3px"></div>
<div style="left:36px;top:12px;width:33px;height:9px;background:linear-gradient(#768da4,#566c83);border-radius:0 0 3px 0"></div>
</div>
<div style="left:444px;top:536px;width:2px;height:120px;background:#0d0e0f"></div>
<div style="left:449px;top:542px;width:19px;height:1px;background:#5f6970"></div>
<div style="left:449px;top:565px;width:19px;height:1px;background:#8a949c"></div>
<div style="left:449px;top:585px;width:19px;height:1px;background:#5f6970"></div>
<div style="left:449px;top:600px;width:19px;height:1px;background:#5f6970"></div>
<div style="left:449px;top:613px;width:19px;height:1px;background:#5f6970"></div>
<div style="left:449px;top:622px;width:19px;height:1px;background:#5f6970"></div>
<div style="left:449px;top:634px;width:19px;height:1px;background:#5f6970"></div>
<div style="left:449px;top:640px;width:19px;height:1px;background:#5f6970"></div>
<div style="left:449px;top:649px;width:19px;height:1px;background:#5f6970"></div>
<div style="left:475px;top:535px;width:29px;height:122px;border-radius:5px;background:linear-gradient(#232122,#0a0909 9px,#000 10px);border:1px solid #656e76">
<div style="left:2px;top:9px;width:23px;height:1px;background:#5f6468"></div>
</div>
<div style="left:438px;top:555px;width:14px;height:29px;border-radius:2px;border:1px solid #5c1414;background:linear-gradient(#f47c7c,#e24444 2px,#cf3030 4px,#d63636 12px,#3a0a0a 13px,#3a0a0a 14px,#ee5252 15px,#e64a4a 23px,#f26464 25px,#d03030 27px);box-shadow:1px 2px 2px rgba(0,0,0,.45)"></div>
<div style="left:435px;top:663px;width:73px;height:13px;background:#2d3237"></div>
<span class="t" style="left:440.8px;top:664px;font-size:9.5px;line-height:11px;color:#f0f0f0;font-weight:bold;transform:scaleX(1.071);">-0.92</span>
<span class="t" style="left:481.5px;top:664px;font-size:9.5px;line-height:11px;color:#7d858c;font-weight:bold;transform:scaleX(1.049);">-oo</span>
<div style="left:435px;top:676px;width:73px;height:28px;background:#0b0c0d;border-radius:6px;border:1px solid #67727a">
<div style="left:2px;top:2px;width:32px;height:10px;background:linear-gradient(#768da4,#566c83);border-radius:3px 0 0 0"></div>
<div style="left:36px;top:2px;width:33px;height:10px;background:linear-gradient(#768da4,#566c83);border-radius:0 3px 0 0"></div>
<div style="left:2px;top:14px;width:32px;height:10px;background:linear-gradient(#768da4,#566c83);border-radius:0 0 0 3px"></div>
<div style="left:36px;top:14px;width:33px;height:10px;background:linear-gradient(#768da4,#566c83);border-radius:0 0 3px 0"></div>
</div>
<span class="t" style="left:450px;top:680px;font-size:9px;line-height:10px;color:#0c0f0c;font-weight:bold;transform:scaleX(0.880);">R</span>
<span class="t" style="left:484.2px;top:680px;font-size:9px;line-height:10px;color:#0c0f0c;font-weight:bold;transform:scaleX(1.152);">W</span>
<div style="left:435px;top:710px;width:73px;height:19px;background:#222528"></div>
<svg style="left:439px;top:712px" width="16" height="15"><circle cx="8.500" cy="7.600" r="4.800" fill="none" stroke="#c5c8cb" stroke-width="1.800"/></svg>
<span class="t" style="left:498.1px;top:714px;font-size:11px;line-height:12px;color:#b8bcc0;font-weight:bold;transform:scaleX(1.016);">4</span>
<div style="left:435px;top:729px;width:73px;height:25px;background:#97999b"></div>
<span class="t" style="left:439.8px;top:734px;font-size:12px;line-height:14px;color:#111;transform:scaleX(1.016);">Mono In 2</span>
<div style="left:1056px;top:481px;width:71px;height:17px;background:#1c1e20;border-radius:3px;box-shadow:0 0 0 1px #131416"></div>
<div style="left:1055px;top:503px;width:73px;height:24px;background:#0b0c0d;border-radius:6px;border:1px solid #67727a">
<div style="left:2px;top:1px;width:32px;height:9px;background:linear-gradient(#768da4,#566c83);border-radius:3px 0 0 0"></div>
<div style="left:36px;top:1px;width:33px;height:9px;background:linear-gradient(#768da4,#566c83);border-radius:0 3px 0 0"></div>
<div style="left:2px;top:12px;width:32px;height:9px;background:linear-gradient(#768da4,#566c83);border-radius:0 0 0 3px"></div>
<div style="left:36px;top:12px;width:33px;height:9px;background:linear-gradient(#768da4,#566c83);border-radius:0 0 3px 0"></div>
</div>
<div style="left:1064px;top:536px;width:2px;height:120px;background:#0d0e0f"></div>
<div style="left:1069px;top:542px;width:19px;height:1px;background:#5f6970"></div>
<div style="left:1069px;top:565px;width:19px;height:1px;background:#8a949c"></div>
<div style="left:1069px;top:585px;width:19px;height:1px;background:#5f6970"></div>
<div style="left:1069px;top:600px;width:19px;height:1px;background:#5f6970"></div>
<div style="left:1069px;top:613px;width:19px;height:1px;background:#5f6970"></div>
<div style="left:1069px;top:622px;width:19px;height:1px;background:#5f6970"></div>
<div style="left:1069px;top:634px;width:19px;height:1px;background:#5f6970"></div>
<div style="left:1069px;top:640px;width:19px;height:1px;background:#5f6970"></div>
<div style="left:1069px;top:649px;width:19px;height:1px;background:#5f6970"></div>
<div style="left:1095px;top:535px;width:29px;height:122px;border-radius:5px;background:linear-gradient(#232122,#0a0909 9px,#000 10px);border:1px solid #656e76">
<div style="left:2px;top:9px;width:23px;height:1px;background:#5f6468"></div>
</div>
<div style="left:1058px;top:536px;width:14px;height:29px;border-radius:2px;border:1px solid #5c1414;background:linear-gradient(#f47c7c,#e24444 2px,#cf3030 4px,#d63636 12px,#3a0a0a 13px,#3a0a0a 14px,#ee5252 15px,#e64a4a 23px,#f26464 25px,#d03030 27px);box-shadow:1px 2px 2px rgba(0,0,0,.45)"></div>
<div style="left:1055px;top:663px;width:73px;height:13px;background:#2d3237"></div>
<span class="t" style="left:1062.1px;top:664px;font-size:9.5px;line-height:11px;color:#f0f0f0;font-weight:bold;transform:scaleX(1.137);">0.00</span>
<span class="t" style="left:1101.5px;top:664px;font-size:9.5px;line-height:11px;color:#7d858c;font-weight:bold;transform:scaleX(1.049);">-oo</span>
<div style="left:1055px;top:676px;width:73px;height:28px;background:#0b0c0d;border-radius:6px;border:1px solid #67727a">
<div style="left:2px;top:2px;width:32px;height:10px;background:linear-gradient(#768da4,#566c83);border-radius:3px 0 0 0"></div>
<div style="left:36px;top:2px;width:33px;height:10px;background:linear-gradient(#768da4,#566c83);border-radius:0 3px 0 0"></div>
<div style="left:2px;top:14px;width:32px;height:10px;background:linear-gradient(#768da4,#566c83);border-radius:0 0 0 3px"></div>
<div style="left:36px;top:14px;width:33px;height:10px;background:linear-gradient(#768da4,#566c83);border-radius:0 0 3px 0"></div>
</div>
<span class="t" style="left:1070px;top:680px;font-size:9px;line-height:10px;color:#0c0f0c;font-weight:bold;transform:scaleX(0.880);">R</span>
<span class="t" style="left:1104.2px;top:680px;font-size:9px;line-height:10px;color:#0c0f0c;font-weight:bold;transform:scaleX(1.152);">W</span>
<div style="left:1055px;top:710px;width:73px;height:19px;background:#222528"></div>
<svg style="left:1056px;top:712px" width="22" height="15"><circle cx="7" cy="7.500" r="4.600" fill="none" stroke="#c5c8cb" stroke-width="1.800"/><circle cx="14.800" cy="7.500" r="4.600" fill="none" stroke="#222528" stroke-width="3.600"/><circle cx="14.800" cy="7.500" r="4.600" fill="none" stroke="#c5c8cb" stroke-width="1.800"/></svg>
<span class="t" style="left:1119px;top:714px;font-size:11px;line-height:12px;color:#b8bcc0;font-weight:bold;transform:scaleX(0.655);">1</span>
<div style="left:1055px;top:729px;width:73px;height:25px;background:#97999b"></div>
<span class="t" style="left:1059.8px;top:734px;font-size:12px;line-height:14px;color:#111;transform:scaleX(0.948);">Stereo Out</span>
<div style="left:1130px;top:481px;width:71px;height:17px;background:#1c1e20;border-radius:3px;box-shadow:0 0 0 1px #131416"></div>
<div style="left:1129px;top:503px;width:73px;height:24px;background:#0b0c0d;border-radius:6px;border:1px solid #67727a">
<div style="left:2px;top:1px;width:32px;height:9px;background:linear-gradient(#768da4,#566c83);border-radius:3px 0 0 0"></div>
<div style="left:36px;top:1px;width:33px;height:9px;background:linear-gradient(#768da4,#566c83);border-radius:0 3px 0 0"></div>
<div style="left:2px;top:12px;width:32px;height:9px;background:linear-gradient(#768da4,#566c83);border-radius:0 0 0 3px"></div>
<div style="left:36px;top:12px;width:33px;height:9px;background:linear-gradient(#768da4,#566c83);border-radius:0 0 3px 0"></div>
</div>
<div style="left:1138px;top:536px;width:2px;height:120px;background:#0d0e0f"></div>
<div style="left:1143px;top:542px;width:19px;height:1px;background:#5f6970"></div>
<div style="left:1143px;top:565px;width:19px;height:1px;background:#8a949c"></div>
<div style="left:1143px;top:585px;width:19px;height:1px;background:#5f6970"></div>
<div style="left:1143px;top:600px;width:19px;height:1px;background:#5f6970"></div>
<div style="left:1143px;top:613px;width:19px;height:1px;background:#5f6970"></div>
<div style="left:1143px;top:622px;width:19px;height:1px;background:#5f6970"></div>
<div style="left:1143px;top:634px;width:19px;height:1px;background:#5f6970"></div>
<div style="left:1143px;top:640px;width:19px;height:1px;background:#5f6970"></div>
<div style="left:1143px;top:649px;width:19px;height:1px;background:#5f6970"></div>
<div style="left:1169px;top:535px;width:29px;height:122px;border-radius:5px;background:linear-gradient(#232122,#0a0909 9px,#000 10px);border:1px solid #656e76">
<div style="left:2px;top:9px;width:23px;height:1px;background:#5f6468"></div>
</div>
<div style="left:1132px;top:634px;width:14px;height:29px;border-radius:2px;border:1px solid #5c1414;background:linear-gradient(#f47c7c,#e24444 2px,#cf3030 4px,#d63636 12px,#3a0a0a 13px,#3a0a0a 14px,#ee5252 15px,#e64a4a 23px,#f26464 25px,#d03030 27px);box-shadow:1px 2px 2px rgba(0,0,0,.45)"></div>
<div style="left:1129px;top:663px;width:73px;height:13px;background:#2d3237"></div>
<span class="t" style="left:1139.7px;top:664px;font-size:9.5px;line-height:11px;color:#f0f0f0;font-weight:bold;transform:scaleX(1.029);">-oo</span>
<span class="t" style="left:1175.5px;top:664px;font-size:9.5px;line-height:11px;color:#7d858c;font-weight:bold;transform:scaleX(1.049);">-oo</span>
<div style="left:1129px;top:676px;width:73px;height:28px;background:#0b0c0d;border-radius:6px;border:1px solid #67727a">
<div style="left:2px;top:2px;width:32px;height:10px;background:linear-gradient(#768da4,#566c83);border-radius:3px 0 0 0"></div>
<div style="left:36px;top:2px;width:33px;height:10px;background:linear-gradient(#768da4,#566c83);border-radius:0 3px 0 0"></div>
<div style="left:2px;top:14px;width:32px;height:10px;background:linear-gradient(#768da4,#566c83);border-radius:0 0 0 3px"></div>
<div style="left:36px;top:14px;width:33px;height:10px;background:linear-gradient(#768da4,#566c83);border-radius:0 0 3px 0"></div>
</div>
<span class="t" style="left:1144px;top:680px;font-size:9px;line-height:10px;color:#0c0f0c;font-weight:bold;transform:scaleX(0.880);">R</span>
<span class="t" style="left:1178.2px;top:680px;font-size:9px;line-height:10px;color:#0c0f0c;font-weight:bold;transform:scaleX(1.152);">W</span>
<div style="left:1129px;top:710px;width:73px;height:19px;background:#222528"></div>
<svg style="left:1130px;top:712px" width="22" height="15"><circle cx="7" cy="7.500" r="4.600" fill="none" stroke="#c5c8cb" stroke-width="1.800"/><circle cx="14.800" cy="7.500" r="4.600" fill="none" stroke="#222528" stroke-width="3.600"/><circle cx="14.800" cy="7.500" r="4.600" fill="none" stroke="#c5c8cb" stroke-width="1.800"/></svg>
<span class="t" style="left:1191.8px;top:714px;font-size:11px;line-height:12px;color:#b8bcc0;font-weight:bold;transform:scaleX(0.934);">2</span>
<div style="left:1129px;top:729px;width:73px;height:25px;background:#97999b"></div>
<span class="t" style="left:1133.9px;top:730px;font-size:12px;line-height:14px;color:#111;transform:scaleX(0.953);">Stereo Out</span>
<span class="t" style="left:1133.9px;top:741px;font-size:12px;line-height:14px;color:#111;transform:scaleX(0.751);">2</span>
<div style="left:1204px;top:481px;width:71px;height:17px;background:#1c1e20;border-radius:3px;box-shadow:0 0 0 1px #131416"></div>
<div style="left:1203px;top:503px;width:73px;height:24px;background:#0b0c0d;border-radius:6px;border:1px solid #67727a">
<div style="left:2px;top:1px;width:32px;height:9px;background:linear-gradient(#768da4,#566c83);border-radius:3px 0 0 0"></div>
<div style="left:36px;top:1px;width:33px;height:9px;background:linear-gradient(#768da4,#566c83);border-radius:0 3px 0 0"></div>
<div style="left:2px;top:12px;width:32px;height:9px;background:linear-gradient(#768da4,#566c83);border-radius:0 0 0 3px"></div>
<div style="left:36px;top:12px;width:33px;height:9px;background:linear-gradient(#768da4,#566c83);border-radius:0 0 3px 0"></div>
</div>
<div style="left:1212px;top:536px;width:2px;height:120px;background:#0d0e0f"></div>
<div style="left:1217px;top:542px;width:19px;height:1px;background:#5f6970"></div>
<div style="left:1217px;top:565px;width:19px;height:1px;background:#8a949c"></div>
<div style="left:1217px;top:585px;width:19px;height:1px;background:#5f6970"></div>
<div style="left:1217px;top:600px;width:19px;height:1px;background:#5f6970"></div>
<div style="left:1217px;top:613px;width:19px;height:1px;background:#5f6970"></div>
<div style="left:1217px;top:622px;width:19px;height:1px;background:#5f6970"></div>
<div style="left:1217px;top:634px;width:19px;height:1px;background:#5f6970"></div>
<div style="left:1217px;top:640px;width:19px;height:1px;background:#5f6970"></div>
<div style="left:1217px;top:649px;width:19px;height:1px;background:#5f6970"></div>
<div style="left:1243px;top:535px;width:29px;height:122px;border-radius:5px;background:linear-gradient(#232122,#0a0909 9px,#000 10px);border:1px solid #656e76">
<div style="left:2px;top:9px;width:23px;height:1px;background:#5f6468"></div>
</div>
<div style="left:1206px;top:616px;width:14px;height:29px;border-radius:2px;border:1px solid #5c1414;background:linear-gradient(#f47c7c,#e24444 2px,#cf3030 4px,#d63636 12px,#3a0a0a 13px,#3a0a0a 14px,#ee5252 15px,#e64a4a 23px,#f26464 25px,#d03030 27px);box-shadow:1px 2px 2px rgba(0,0,0,.45)"></div>
<div style="left:1203px;top:663px;width:73px;height:13px;background:#3a4045"></div>
<span class="t" style="left:1208.8px;top:664px;font-size:9.5px;line-height:11px;color:#f0f0f0;font-weight:bold;transform:scaleX(1.071);">-27.1</span>
<span class="t" style="left:1249.5px;top:664px;font-size:9.5px;line-height:11px;color:#7d858c;font-weight:bold;transform:scaleX(1.049);">-oo</span>
<div style="left:1203px;top:676px;width:73px;height:28px;background:#0b0c0d;border-radius:6px;border:1px solid #67727a">
<div style="left:2px;top:2px;width:32px;height:10px;background:linear-gradient(#768da4,#566c83);border-radius:3px 0 0 0"></div>
<div style="left:36px;top:2px;width:33px;height:10px;background:linear-gradient(#768da4,#566c83);border-radius:0 3px 0 0"></div>
<div style="left:2px;top:14px;width:32px;height:10px;background:linear-gradient(#768da4,#566c83);border-radius:0 0 0 3px"></div>
<div style="left:36px;top:14px;width:33px;height:10px;background:linear-gradient(#768da4,#566c83);border-radius:0 0 3px 0"></div>
</div>
<span class="t" style="left:1218px;top:680px;font-size:9px;line-height:10px;color:#0c0f0c;font-weight:bold;transform:scaleX(0.880);">R</span>
<span class="t" style="left:1252.2px;top:680px;font-size:9px;line-height:10px;color:#0c0f0c;font-weight:bold;transform:scaleX(1.152);">W</span>
<div style="left:1203px;top:710px;width:73px;height:19px;background:#222528"></div>
<svg style="left:1207px;top:712px" width="16" height="15"><circle cx="8.500" cy="7.600" r="4.800" fill="none" stroke="#c5c8cb" stroke-width="1.800"/></svg>
<span class="t" style="left:1266px;top:714px;font-size:11px;line-height:12px;color:#b8bcc0;font-weight:bold;transform:scaleX(0.868);">3</span>
<div style="left:1203px;top:729px;width:73px;height:25px;background:#97999b"></div>
<span class="t" style="left:1207.8px;top:734px;font-size:12px;line-height:14px;color:#111;transform:scaleX(1.029);">Mono Out</span>
<div style="left:1278px;top:481px;width:71px;height:17px;background:#1c1e20;border-radius:3px;box-shadow:0 0 0 1px #131416"></div>
<div style="left:1277px;top:503px;width:73px;height:24px;background:#0b0c0d;border-radius:6px;border:1px solid #67727a">
<div style="left:2px;top:1px;width:32px;height:9px;background:linear-gradient(#768da4,#566c83);border-radius:3px 0 0 0"></div>
<div style="left:36px;top:1px;width:33px;height:9px;background:linear-gradient(#768da4,#566c83);border-radius:0 3px 0 0"></div>
<div style="left:2px;top:12px;width:32px;height:9px;background:linear-gradient(#768da4,#566c83);border-radius:0 0 0 3px"></div>
<div style="left:36px;top:12px;width:33px;height:9px;background:linear-gradient(#768da4,#566c83);border-radius:0 0 3px 0"></div>
</div>
<div style="left:1286px;top:536px;width:2px;height:120px;background:#0d0e0f"></div>
<div style="left:1291px;top:542px;width:19px;height:1px;background:#5f6970"></div>
<div style="left:1291px;top:565px;width:19px;height:1px;background:#8a949c"></div>
<div style="left:1291px;top:585px;width:19px;height:1px;background:#5f6970"></div>
<div style="left:1291px;top:600px;width:19px;height:1px;background:#5f6970"></div>
<div style="left:1291px;top:613px;width:19px;height:1px;background:#5f6970"></div>
<div style="left:1291px;top:622px;width:19px;height:1px;background:#5f6970"></div>
<div style="left:1291px;top:634px;width:19px;height:1px;background:#5f6970"></div>
<div style="left:1291px;top:640px;width:19px;height:1px;background:#5f6970"></div>
<div style="left:1291px;top:649px;width:19px;height:1px;background:#5f6970"></div>
<div style="left:1317px;top:535px;width:29px;height:122px;border-radius:5px;background:linear-gradient(#232122,#0a0909 9px,#000 10px);border:1px solid #656e76">
<div style="left:2px;top:9px;width:23px;height:1px;background:#5f6468"></div>
</div>
<div style="left:1280px;top:634px;width:14px;height:29px;border-radius:2px;border:1px solid #5c1414;background:linear-gradient(#f47c7c,#e24444 2px,#cf3030 4px,#d63636 12px,#3a0a0a 13px,#3a0a0a 14px,#ee5252 15px,#e64a4a 23px,#f26464 25px,#d03030 27px);box-shadow:1px 2px 2px rgba(0,0,0,.45)"></div>
<div style="left:1277px;top:663px;width:73px;height:13px;background:#2d3237"></div>
<span class="t" style="left:1287.7px;top:664px;font-size:9.5px;line-height:11px;color:#f0f0f0;font-weight:bold;transform:scaleX(1.029);">-oo</span>
<span class="t" style="left:1323.5px;top:664px;font-size:9.5px;line-height:11px;color:#7d858c;font-weight:bold;transform:scaleX(1.049);">-oo</span>
<div style="left:1277px;top:676px;width:73px;height:28px;background:#0b0c0d;border-radius:6px;border:1px solid #67727a">
<div style="left:2px;top:2px;width:32px;height:10px;background:linear-gradient(#768da4,#566c83);border-radius:3px 0 0 0"></div>
<div style="left:36px;top:2px;width:33px;height:10px;background:linear-gradient(#768da4,#566c83);border-radius:0 3px 0 0"></div>
<div style="left:2px;top:14px;width:32px;height:10px;background:linear-gradient(#768da4,#566c83);border-radius:0 0 0 3px"></div>
<div style="left:36px;top:14px;width:33px;height:10px;background:linear-gradient(#768da4,#566c83);border-radius:0 0 3px 0"></div>
</div>
<span class="t" style="left:1292px;top:680px;font-size:9px;line-height:10px;color:#0c0f0c;font-weight:bold;transform:scaleX(0.880);">R</span>
<span class="t" style="left:1326.2px;top:680px;font-size:9px;line-height:10px;color:#0c0f0c;font-weight:bold;transform:scaleX(1.152);">W</span>
<div style="left:1277px;top:710px;width:73px;height:19px;background:#222528"></div>
<svg style="left:1281px;top:712px" width="16" height="15"><circle cx="8.500" cy="7.600" r="4.800" fill="none" stroke="#c5c8cb" stroke-width="1.800"/></svg>
<span class="t" style="left:1340.1px;top:714px;font-size:11px;line-height:12px;color:#b8bcc0;font-weight:bold;transform:scaleX(1.016);">4</span>
<div style="left:1277px;top:729px;width:73px;height:25px;background:#97999b"></div>
<span class="t" style="left:1281.9px;top:730px;font-size:12px;line-height:14px;color:#111;transform:scaleX(1.033);">Mono Out</span>
<span class="t" style="left:1281.9px;top:741px;font-size:12px;line-height:14px;color:#111;transform:scaleX(0.751);">2</span>
<div style="left:0;top:766px;width:1366px;height:2px;background:#1f8a3f"></div>
<div style="left:80px;top:766px;width:59px;height:2px;background:#55b274"></div>
<div style="left:266px;top:766px;width:61px;height:2px;background:#55b274"></div>
<div style="left:328px;top:766px;width:59px;height:2px;background:#55b274"></div>
<div style="left:391px;top:766px;width:54px;height:2px;background:#55b274"></div>
<div style="left:506px;top:158px;width:835px;height:439px;background:#22c054;box-shadow:inset 0 0 0 1px #20b54f"></div>
<span class="t" style="left:840.5px;top:166px;font-size:14.5px;line-height:16px;color:#16622e;transform:scaleX(0.994);">VST Connections - Inputs</span>
<div style="left:1314px;top:164px;width:18px;height:19px;background:#c8414b"></div>
<span class="t" style="left:1320px;top:167px;font-size:11px;line-height:12px;color:#fff;font-weight:bold;transform:scaleX(0.983);">x</span>
<div style="left:513px;top:188px;width:819px;height:401px;background:#a0a4a6;box-shadow:inset 1px 1px 0 #b4b8ba,0 -1px 0 #1fa94a"></div>
<div style="left:514px;top:213px;width:818px;height:1px;background:#c4c7c9"></div>
<div style="left:514px;top:214px;width:818px;height:1px;background:#909496"></div>
<div style="left:519px;top:193px;width:63px;height:21px;background:#a0a4a6;border-radius:4px 4px 0 0;box-shadow:inset 1px 1px 0 #d2d5d7,inset -2px 0 0 #777b7e"></div>
<div style="left:583px;top:193px;width:63px;height:20px;background:#9a9ea0;border-radius:4px 4px 0 0;box-shadow:inset 1px 1px 0 #d2d5d7,inset -2px 0 0 #777b7e"></div>
<span class="t" style="left:533.6px;top:198px;font-size:11.5px;line-height:12px;color:#050505;font-weight:bold;transform:scaleX(0.974);-webkit-text-stroke:0.2px #000;">Inputs</span>
<span class="t" style="left:593.4px;top:198px;font-size:11.5px;line-height:12px;color:#0a0a0a;transform:scaleX(1.039);">Outputs</span>
<svg style="left:528px;top:226px" width="24" height="11"><g fill="none" stroke="#111" stroke-width="1"><rect x="1.500" y="1.500" width="8" height="8"/><rect x="13.500" y="1.500" width="8" height="8"/><path d="M3 5.500 H8 M5.500 3 V8 M15 5.500 H20"/></g></svg>
<span class="t" style="left:553.9px;top:225px;font-size:12px;line-height:14px;color:#111;transform:scaleX(1.021);">All</span>
<div style="left:592px;top:223px;width:120px;height:16px;background:linear-gradient(#e6e6e6,#d2d3d3);box-shadow:inset -1px -1px 0 #6e7275,inset 1px 1px 0 #f4f4f4,1px 1px 0 #585c5f"></div>
<span class="t" style="left:630px;top:225px;font-size:12px;line-height:14px;color:#111;transform:scaleX(0.950);">Add Bus</span>
<span class="t" style="left:750.4px;top:224px;font-size:12px;line-height:14px;color:#111;transform:scaleX(0.880);">Presets</span>
<div style="left:790px;top:223px;width:79px;height:16px;background:#000;border:1px solid #6e7275;box-shadow:inset 1px 1px 0 #3a3a3a"></div>
<div style="left:856px;top:225px;width:12px;height:13px;background:#efefef;box-shadow:inset -1px -1px 0 #8a8a8a"></div>
<svg style="left:858px;top:231px" width="8" height="4"><path d="M0.500 0 H7.500 L4 3.800Z" fill="#111"/></svg>
<span class="t" style="left:797.8px;top:225px;font-size:11px;line-height:12px;color:#e8e8e8;transform:scaleX(0.597);">-</span>
<svg style="left:876px;top:222px" width="19" height="16"><rect x="0.500" y="1.500" width="17" height="13" rx="2" fill="#b6babc" stroke="#6a6e72"/><path d="M1 14.500 H17.500 V3" fill="none" stroke="#4a4e52" stroke-width="1"/><path d="M3.500 3.500 H11.500 L15.500 6.500 V11.500 H3.500 Z" fill="#dfe3e8" stroke="#111" stroke-width="1.600" stroke-linejoin="miter"/><path d="M11.500 3.500 V6.500 H15.500" fill="none" stroke="#111" stroke-width="1.200"/><path d="M5 7.500 H11 M8 4.800 V10.200" stroke="#111" stroke-width="1.500" fill="none"/></svg>
<svg style="left:897px;top:222px" width="19" height="16"><rect x="0.500" y="1.500" width="17" height="13" rx="2" fill="#b6babc" stroke="#6a6e72"/><path d="M1 14.500 H17.500 V3" fill="none" stroke="#4a4e52" stroke-width="1"/><path d="M3.500 3.500 H11.500 L15.500 6.500 V11.500 H3.500 Z" fill="#dfe3e8" stroke="#111" stroke-width="1.600" stroke-linejoin="miter"/><path d="M11.500 3.500 V6.500 H15.500" fill="none" stroke="#111" stroke-width="1.200"/><path d="M5 7.500 H11" stroke="#111" stroke-width="1.500" fill="none"/></svg>
<div style="left:519px;top:246px;width:807px;height:324px;background:#54585b"></div>
<div style="left:519px;top:569px;width:791px;height:17px;background:#54585b"></div>
<div style="left:521px;top:248px;width:788px;height:321px;background:#e5eaf2"></div>
<div style="left:521px;top:248px;width:788px;height:16px;background:linear-gradient(#a3a7a9,#96999c);border-bottom:1px solid #5e6265"></div>
<div style="left:952px;top:280px;width:129px;height:16px;background:#fdf0b0"></div>
<div style="left:952px;top:296px;width:129px;height:16px;background:#fdf0b0"></div>
<div style="left:952px;top:328px;width:129px;height:16px;background:#fdf0b0"></div>
<div style="left:952px;top:344px;width:129px;height:16px;background:#fdf0b0"></div>
<div style="left:952px;top:376px;width:129px;height:16px;background:#fdf0b0"></div>
<div style="left:952px;top:408px;width:129px;height:16px;background:#fdf0b0"></div>
<div style="left:521px;top:280px;width:788px;height:1px;background:#a4a9af"></div>
<div style="left:521px;top:296px;width:788px;height:1px;background:#a4a9af"></div>
<div style="left:521px;top:312px;width:788px;height:1px;background:#a4a9af"></div>
<div style="left:521px;top:328px;width:788px;height:1px;background:#a4a9af"></div>
<div style="left:521px;top:344px;width:788px;height:1px;background:#a4a9af"></div>
<div style="left:521px;top:360px;width:788px;height:1px;background:#a4a9af"></div>
<div style="left:521px;top:376px;width:788px;height:1px;background:#a4a9af"></div>
<div style="left:521px;top:392px;width:788px;height:1px;background:#a4a9af"></div>
<div style="left:521px;top:408px;width:788px;height:1px;background:#a4a9af"></div>
<div style="left:521px;top:424px;width:788px;height:1px;background:#a4a9af"></div>
<div style="left:663px;top:248px;width:1px;height:321px;background:#7e8386"></div>
<div style="left:743px;top:248px;width:1px;height:321px;background:#7e8386"></div>
<div style="left:951px;top:248px;width:1px;height:321px;background:#7e8386"></div>
<div style="left:1081px;top:248px;width:1px;height:321px;background:#7e8386"></div>
<div style="left:664px;top:249px;width:1px;height:14px;background:#b6b9bb"></div>
<div style="left:744px;top:249px;width:1px;height:14px;background:#b6b9bb"></div>
<div style="left:952px;top:249px;width:1px;height:14px;background:#b6b9bb"></div>
<div style="left:1082px;top:249px;width:1px;height:14px;background:#b6b9bb"></div>
<span class="t" style="left:526.6px;top:250px;font-size:11px;line-height:12px;color:#111;transform:scaleX(0.967);">Bus Name</span>
<span class="t" style="left:669px;top:250px;font-size:11px;line-height:12px;color:#111;transform:scaleX(0.979);">Speakers</span>
<span class="t" style="left:748.9px;top:250px;font-size:11px;line-height:12px;color:#111;transform:scaleX(1.022);">Audio Device</span>
<span class="t" style="left:957.4px;top:250px;font-size:11px;line-height:12px;color:#111;transform:scaleX(0.995);">Device Port</span>
<div style="left:531px;top:264px;width:1px;height:132px;background:repeating-linear-gradient(#7a7e82 0 1px,transparent 1px 2px)"></div>
<svg style="left:527px;top:268px" width="9" height="9"><rect x="0.500" y="0.500" width="8" height="8" fill="#fff" stroke="#7d8185"/><path d="M2 4.500 H7" stroke="#111"/></svg>
<div style="left:537px;top:272px;width:5px;height:1px;background:repeating-linear-gradient(90deg,#7a7e82 0 1px,transparent 1px 2px)"></div>
<div style="left:551px;top:279px;width:1px;height:26px;background:repeating-linear-gradient(#7a7e82 0 1px,transparent 1px 2px)"></div>
<svg style="left:543px;top:266px" width="16" height="14"><path d="M1.500 4.500 H4 L7.500 1.200 V12.800 L4 9.500 H1.500 Z" fill="#ee6a40" stroke="#7a2a10" stroke-width="0.900"/><path d="M9.500 4 Q11.800 7 9.500 10" fill="none" stroke="#8f959b" stroke-width="1.200"/><path d="M11.300 2.300 Q15 7 11.300 11.700" fill="none" stroke="#aeb3b9" stroke-width="1.200"/></svg>
<span class="t" style="left:564.6px;top:267px;font-size:11px;line-height:12px;color:#111;">Stereo In</span>
<span class="t" style="left:668.7px;top:267px;font-size:11px;line-height:12px;color:#666a6e;transform:scaleX(0.966);">Stereo</span>
<span class="t" style="left:748.5px;top:267px;font-size:11px;line-height:12px;color:#111;transform:scaleX(1.016);">M-Audio M-Track Eight ASIO (64)</span>
<svg style="left:548px;top:280px" width="32" height="16"><path d="M4 8.500 H15" stroke="#7a7e82" stroke-dasharray="1 1"/><path d="M15 9.500 H23" stroke="#666a6e" stroke-width="1"/><circle cx="25.500" cy="9.500" r="2.500" fill="#dfe4ec" stroke="#6c7176" stroke-width="1.500"/></svg>
<span class="t" style="left:583.8px;top:283px;font-size:11px;line-height:12px;color:#111;transform:scaleX(1.040);">Left</span>
<span class="t" style="left:956.6px;top:283px;font-size:11px;line-height:12px;color:#111;transform:scaleX(0.969);">In 1</span>
<svg style="left:548px;top:296px" width="32" height="16"><path d="M4 8.500 H15" stroke="#7a7e82" stroke-dasharray="1 1"/><path d="M15 9.500 H23" stroke="#666a6e" stroke-width="1"/><circle cx="25.500" cy="9.500" r="2.500" fill="#dfe4ec" stroke="#6c7176" stroke-width="1.500"/></svg>
<span class="t" style="left:583.8px;top:299px;font-size:11px;line-height:12px;color:#111;transform:scaleX(1.086);">Right</span>
<span class="t" style="left:956.6px;top:299px;font-size:11px;line-height:12px;color:#111;transform:scaleX(0.969);">In 2</span>
<svg style="left:527px;top:316px" width="9" height="9"><rect x="0.500" y="0.500" width="8" height="8" fill="#fff" stroke="#7d8185"/><path d="M2 4.500 H7" stroke="#111"/></svg>
<div style="left:537px;top:320px;width:6px;height:1px;background:repeating-linear-gradient(90deg,#7a7e82 0 1px,transparent 1px 2px)"></div>
<div style="left:551px;top:327px;width:1px;height:26px;background:repeating-linear-gradient(#7a7e82 0 1px,transparent 1px 2px)"></div>
<span class="t" style="left:544.2px;top:315px;font-size:11px;line-height:12px;color:#111;transform:scaleX(1.009);">Stereo In 2</span>
<span class="t" style="left:668.7px;top:315px;font-size:11px;line-height:12px;color:#666a6e;transform:scaleX(0.966);">Stereo</span>
<span class="t" style="left:748.5px;top:315px;font-size:11px;line-height:12px;color:#111;transform:scaleX(1.016);">M-Audio M-Track Eight ASIO (64)</span>
<svg style="left:548px;top:328px" width="32" height="16"><path d="M4 8.500 H15" stroke="#7a7e82" stroke-dasharray="1 1"/><path d="M15 9.500 H23" stroke="#666a6e" stroke-width="1"/><circle cx="25.500" cy="9.500" r="2.500" fill="#dfe4ec" stroke="#6c7176" stroke-width="1.500"/></svg>
<span class="t" style="left:583.8px;top:331px;font-size:11px;line-height:12px;color:#111;transform:scaleX(1.040);">Left</span>
<span class="t" style="left:956.6px;top:331px;font-size:11px;line-height:12px;color:#111;transform:scaleX(0.969);">In 1</span>
<svg style="left:548px;top:344px" width="32" height="16"><path d="M4 8.500 H15" stroke="#7a7e82" stroke-dasharray="1 1"/><path d="M15 9.500 H23" stroke="#666a6e" stroke-width="1"/><circle cx="25.500" cy="9.500" r="2.500" fill="#dfe4ec" stroke="#6c7176" stroke-width="1.500"/></svg>
<span class="t" style="left:583.8px;top:347px;font-size:11px;line-height:12px;color:#111;transform:scaleX(1.086);">Right</span>
<span class="t" style="left:956.6px;top:347px;font-size:11px;line-height:12px;color:#111;transform:scaleX(0.969);">In 2</span>
<svg style="left:527px;top:364px" width="9" height="9"><rect x="0.500" y="0.500" width="8" height="8" fill="#fff" stroke="#7d8185"/><path d="M2 4.500 H7" stroke="#111"/></svg>
<div style="left:537px;top:368px;width:6px;height:1px;background:repeating-linear-gradient(90deg,#7a7e82 0 1px,transparent 1px 2px)"></div>
<div style="left:551px;top:375px;width:1px;height:10px;background:repeating-linear-gradient(#7a7e82 0 1px,transparent 1px 2px)"></div>
<span class="t" style="left:544.2px;top:363px;font-size:11px;line-height:12px;color:#111;transform:scaleX(1.089);">Mono In</span>
<span class="t" style="left:668.7px;top:363px;font-size:11px;line-height:12px;color:#666a6e;transform:scaleX(1.065);">Mono</span>
<span class="t" style="left:748.5px;top:363px;font-size:11px;line-height:12px;color:#111;transform:scaleX(1.016);">M-Audio M-Track Eight ASIO (64)</span>
<svg style="left:548px;top:376px" width="32" height="16"><path d="M4 8.500 H15" stroke="#7a7e82" stroke-dasharray="1 1"/><path d="M15 9.500 H23" stroke="#666a6e" stroke-width="1"/><circle cx="25.500" cy="9.500" r="2.500" fill="#dfe4ec" stroke="#6c7176" stroke-width="1.500"/></svg>
<span class="t" style="left:583.8px;top:379px;font-size:11px;line-height:12px;color:#111;transform:scaleX(1.087);">Mono</span>
<span class="t" style="left:956.6px;top:379px;font-size:11px;line-height:12px;color:#111;transform:scaleX(0.969);">In 5</span>
<svg style="left:527px;top:396px" width="9" height="9"><rect x="0.500" y="0.500" width="8" height="8" fill="#fff" stroke="#7d8185"/><path d="M2 4.500 H7" stroke="#111"/></svg>
<div style="left:537px;top:400px;width:6px;height:1px;background:repeating-linear-gradient(90deg,#7a7e82 0 1px,transparent 1px 2px)"></div>
<div style="left:551px;top:407px;width:1px;height:10px;background:repeating-linear-gradient(#7a7e82 0 1px,transparent 1px 2px)"></div>
<span class="t" style="left:544.2px;top:395px;font-size:11px;line-height:12px;color:#111;transform:scaleX(1.070);">Mono In 2</span>
<span class="t" style="left:668.7px;top:395px;font-size:11px;line-height:12px;color:#666a6e;transform:scaleX(1.065);">Mono</span>
<span class="t" style="left:748.5px;top:395px;font-size:11px;line-height:12px;color:#111;transform:scaleX(1.016);">M-Audio M-Track Eight ASIO (64)</span>
<svg style="left:548px;top:408px" width="32" height="16"><path d="M4 8.500 H15" stroke="#7a7e82" stroke-dasharray="1 1"/><path d="M15 9.500 H23" stroke="#666a6e" stroke-width="1"/><circle cx="25.500" cy="9.500" r="2.500" fill="#dfe4ec" stroke="#6c7176" stroke-width="1.500"/></svg>
<span class="t" style="left:583.8px;top:411px;font-size:11px;line-height:12px;color:#111;transform:scaleX(1.087);">Mono</span>
<span class="t" style="left:956.6px;top:411px;font-size:11px;line-height:12px;color:#111;transform:scaleX(0.969);">In 6</span>
<div style="left:1309px;top:248px;width:15px;height:16px;background:#a2a6a8;border-left:1px solid #5e6265"></div>
<div style="left:1309px;top:264px;width:15px;height:305px;background:linear-gradient(90deg,#97999b,#b3b5b7);border-left:1px solid #5e6265"></div>
<div style="left:1309px;top:264px;width:16px;height:16px;background:linear-gradient(#9c9ea0,#b6b8ba);box-shadow:inset 0 0 0 1px #5c6063"></div>
<div style="left:1309px;top:553px;width:16px;height:16px;background:linear-gradient(#9c9ea0,#b6b8ba);box-shadow:inset 0 0 0 1px #5c6063"></div>
<svg style="left:1312px;top:268px" width="10" height="7"><path d="M1 6 L5 1.800 L9 6" fill="none" stroke="#111" stroke-width="1.500"/></svg>
<svg style="left:1312px;top:557px" width="10" height="7"><path d="M1 1 L5 5.200 L9 1" fill="none" stroke="#111" stroke-width="1.500"/></svg>
<div style="left:521px;top:570px;width:788px;height:14px;background:linear-gradient(#97999b,#b3b5b7)"></div>
<div style="left:520px;top:569px;width:16px;height:16px;background:linear-gradient(90deg,#9c9ea0,#b6b8ba);box-shadow:inset 0 0 0 1px #5c6063"></div>
<div style="left:1293px;top:569px;width:16px;height:16px;background:linear-gradient(90deg,#9c9ea0,#b6b8ba);box-shadow:inset 0 0 0 1px #5c6063"></div>
<svg style="left:524px;top:572px" width="7" height="11"><path d="M5.400 1.400 L1.600 5.500 L5.400 9.600" fill="none" stroke="#111" stroke-width="1.500"/></svg>
<svg style="left:1298px;top:572px" width="7" height="11"><path d="M1.400 1.400 L5.200 5.500 L1.400 9.600" fill="none" stroke="#111" stroke-width="1.500"/></svg>
</body></html>
